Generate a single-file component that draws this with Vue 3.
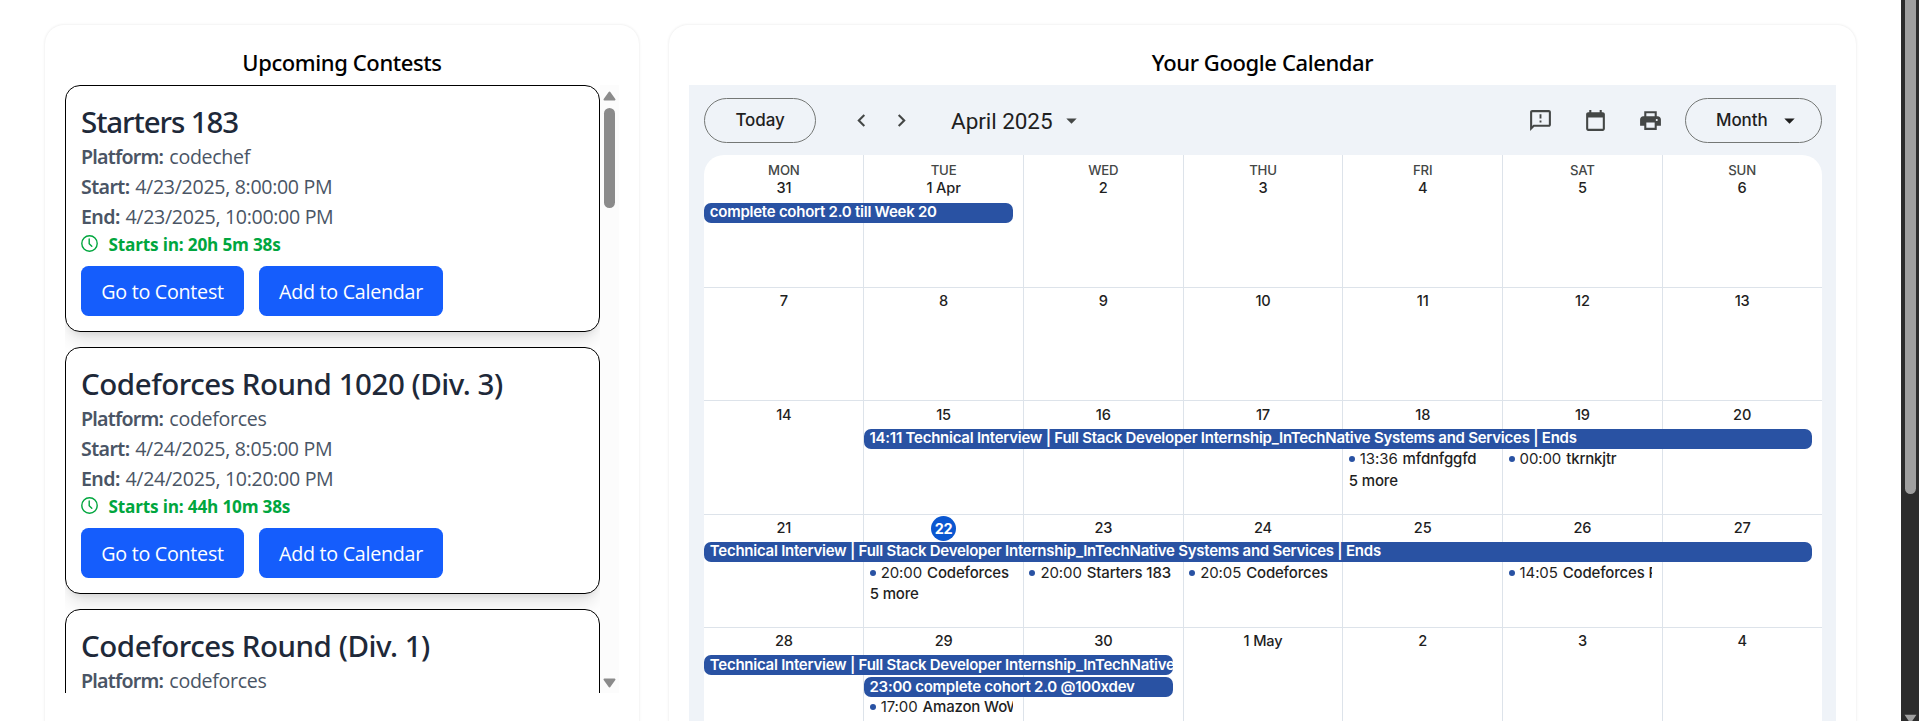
<script setup>
const contests = [
  { title: 'Starters 183', tight: true, platform: 'codechef', start: '4/23/2025, 8:00:00 PM', end: '4/23/2025, 10:00:00 PM', left: '20h 5m 38s' },
  { title: 'Codeforces Round 1020 (Div. 3)', platform: 'codeforces', start: '4/24/2025, 8:05:00 PM', end: '4/24/2025, 10:20:00 PM', left: '44h 10m 38s' },
  { title: 'Codeforces Round (Div. 1)', platform: 'codeforces' },
]
const names = ['MON', 'TUE', 'WED', 'THU', 'FRI', 'SAT', 'SUN']
const interview = 'Technical Interview | Full Stack Developer Internship_InTechNative Systems and Services | Ends'
const weeks = [
  { cls: 'first', days: ['31', '1 Apr', '2', '3', '4', '5', '6'], bars: [{ row: 2, from: 1, to: 3, text: 'complete cohort 2.0 till Week 20' }], items: [] },
  { cls: 'second', days: ['7', '8', '9', '10', '11', '12', '13'], bars: [], items: [] },
  {
    cls: 'third', days: ['14', '15', '16', '17', '18', '19', '20'],
    bars: [{ row: 2, from: 2, to: 8, text: '14:11 ' + interview }],
    items: [
      { row: 3, col: 5, time: '13:36', text: 'mfdnfggfd' },
      { row: 4, col: 5, text: '5 more' },
      { row: 3, col: 6, time: '00:00', text: 'tkrnkjtr' },
    ],
  },
  {
    cls: 'fourth', days: ['21', '22', '23', '24', '25', '26', '27'],
    bars: [{ row: 2, from: 1, to: 8, text: interview }],
    items: [
      { row: 3, col: 2, time: '20:00', text: 'Codeforces' },
      { row: 4, col: 2, text: '5 more' },
      { row: 3, col: 3, time: '20:00', text: 'Starters 183' },
      { row: 3, col: 4, time: '20:05', text: 'Codeforces' },
      { row: 3, col: 6, time: '14:05', text: 'Codeforces R' },
    ],
  },
  {
    cls: 'fifth', days: ['28', '29', '30', '1 May', '2', '3', '4'],
    bars: [
      { row: 2, from: 1, to: 4, text: interview },
      { row: 3, from: 2, to: 4, text: '23:00 complete cohort 2.0 @100xdev' },
    ],
    items: [{ row: 4, col: 2, time: '17:00', text: 'Amazon WoW' }],
  },
]
</script>

<template>
  <div class="page">
    <main class="content">
      <section class="panel contests">
        <h2>Upcoming Contests</h2>
        <div class="scroller">
          <div class="list">
            <article v-for="c in contests" :key="c.title" class="card">
              <h3 :class="{ tight: c.tight }">{{ c.title }}</h3>
              <p><b class="lp">Platform:</b> {{ c.platform }}</p>
              <template v-if="c.start">
                <p><b>Start:</b> {{ c.start }}</p>
                <p><b>End:</b> {{ c.end }}</p>
                <div class="countdown">
                  <svg width="17" height="17" viewBox="0 0 17 17" fill="none" stroke="currentColor" stroke-width="1.4" stroke-linecap="round" stroke-linejoin="round">
                    <circle cx="8.5" cy="8.5" r="7.7" />
                    <path d="M8.2 4v4.8l2.6 2.4" />
                  </svg>
                  <span>Starts in: {{ c.left }}</span>
                </div>
                <div class="actions">
                  <button class="go">Go to Contest</button>
                  <button class="add">Add to Calendar</button>
                </div>
              </template>
            </article>
          </div>
          <div class="track">
            <svg class="up" width="13" height="10" viewBox="0 0 13 10"><path d="M6.5 1.5 11.5 8.5H1.5Z" /></svg>
            <i class="thumb"></i>
            <svg class="down" width="13" height="10" viewBox="0 0 13 10"><path d="M6.5 8.5 11.5 1.5H1.5Z" /></svg>
          </div>
        </div>
      </section>

      <section class="panel calendar">
        <h2>Your Google Calendar</h2>
        <div class="frame">
          <header class="toolbar">
            <button class="pill today-btn">Today</button>
            <svg class="chev prev" width="25" height="25" viewBox="0 0 24 24"><path d="M15.41 7.41 14 6l-6 6 6 6 1.41-1.41L10.83 12z" /></svg>
            <svg class="chev" width="25" height="25" viewBox="0 0 24 24"><path d="M10 6 8.59 7.41 13.17 12l-4.58 4.59L10 18l6-6z" /></svg>
            <span class="month">April 2025</span>
            <svg class="caret" width="25" height="25" viewBox="0 0 24 24"><path d="m7 10 5 5 5-5z" /></svg>
            <div class="tools">
              <svg width="25" height="25" viewBox="0 0 24 24"><path d="M20 2H4c-1.1 0-2 .9-2 2v18l4-4h14c1.1 0 2-.9 2-2V4c0-1.1-.9-2-2-2zm0 14H5.17L4 17.17V4h16v12zM11.1 6h1.8v4h-1.8zm0 6h1.8v2h-1.8z" /></svg>
              <svg width="25" height="25" viewBox="0 0 24 24"><path d="M19 4h-1V2h-2v2H8V2H6v2H5c-1.11 0-1.99.9-1.99 2L3 20c0 1.1.89 2 2 2h14c1.1 0 2-.9 2-2V6c0-1.1-.9-2-2-2zm0 16H5V9h14v11z" /></svg>
              <svg width="25" height="25" viewBox="0 0 24 24"><path fill-rule="evenodd" d="M19 8h-1V3H6v5H5c-1.66 0-3 1.34-3 3v6h4v4h12v-4h4v-6c0-1.66-1.34-3-3-3zM8 5h8v3H8V5zm8 14H8v-5h8v5zm2-6.5c-.55 0-1-.45-1-1s.45-1 1-1 1 .45 1 1-.45 1-1 1z" /></svg>
            </div>
            <button class="pill view-btn">Month
              <svg width="25" height="25" viewBox="0 0 24 24"><path d="m7 10 5 5 5-5z" /></svg>
            </button>
          </header>
          <div class="grid">
            <div v-for="(w, wi) in weeks" :key="w.cls" class="week" :class="w.cls">
              <div v-for="(d, i) in w.days" :key="d" class="day" :class="'c' + (i + 1)">
                <span v-if="wi === 0" class="name">{{ names[i] }}</span>
                <span class="date" :class="{ current: d === '22' }">{{ d }}</span>
              </div>
              <div v-for="b in w.bars" :key="b.row" class="bar" :style="{ gridRow: b.row, gridColumn: b.from + ' / ' + b.to }" :class="{ inset: b.from > 1 }">{{ b.text }}</div>
              <div v-for="e in w.items" :key="e.row + '-' + e.col" class="item" :class="{ more: !e.time }" :style="{ gridRow: e.row, gridColumn: e.col }">
                <template v-if="e.time"><i class="dot"></i><span class="time">{{ e.time }}</span></template>
                <span>{{ e.text }}</span>
              </div>
            </div>
          </div>
        </div>
      </section>
    </main>
    <aside class="window-track">
      <i class="window-thumb"></i>
      <svg width="13" height="10" viewBox="0 0 13 10"><path d="M6.5 9.5 12.5 .8H.5Z" /></svg>
    </aside>
  </div>
</template>

<style>
html, body { margin: 0; background: #fff; overflow: hidden; }
</style>

<style scoped>
* { box-sizing: border-box; }
.page { display: flex; width: 1919px; height: 721px; overflow: hidden; background: #fff; font-family: "Open Sans", "Noto Sans", sans-serif; }
.content { flex: 1; display: flex; gap: 30px; padding: 25px 45px 0; height: 900px; }
.panel { border-radius: 19px; padding: 18px 20px 0; background: #fff; box-shadow: 0 0 3px rgba(0, 0, 0, .11); height: 850px; }
.contests { width: 594px; flex: none; }
.calendar { width: 1187px; flex: none; }
h2 { margin: 0; height: 42px; text-align: center; font: 500 22px/38px "Noto Sans", sans-serif; letter-spacing: -.4px; color: #000; }
.scroller { display: flex; height: 608px; overflow: hidden; }
.list { width: 535px; display: flex; flex-direction: column; gap: 15px; overflow: hidden; }
.card { flex: none; height: 247px; border: 1px solid #000; border-radius: 15px; padding: 15px; background: #fff; box-shadow: 0 12px 19px -4px rgba(0, 0, 0, .12), 0 5px 8px -5px rgba(0, 0, 0, .12); }
h3 { margin: 0; height: 41px; font: 500 29.5px/42px "Noto Sans", sans-serif; letter-spacing: -.46px; color: #1e2939; white-space: nowrap; }
.tight { letter-spacing: -1.1px; }
p { margin: 0; height: 30px; line-height: 30px; font-size: 19.6px; letter-spacing: -.32px; color: #4a5565; white-space: nowrap; }
p b { font-family: "Noto Sans", sans-serif; font-weight: 600; letter-spacing: -.6px; margin-right: 1px; }
p .lp { letter-spacing: -.78px; margin-right: 1.5px; }
.countdown { display: flex; align-items: center; gap: 10.5px; height: 25px; color: #00a63e; font-weight: 700; font-size: 17.2px; letter-spacing: -.2px; }
.countdown svg { margin-bottom: 3px; }
.actions { display: flex; gap: 15px; margin-top: 9px; }
.actions button { height: 50px; border: 0; border-radius: 7.5px; padding: 2px 0 0; background: #155dfc; color: #fff; font: 400 19.7px/48px "Open Sans", sans-serif; letter-spacing: -.27px; }
.go { width: 163px; }
.add { width: 184px; }
.track { width: 19px; background: #fcfcfc; display: flex; flex-direction: column; align-items: center; fill: #8b8b8b; stroke: #8b8b8b; stroke-width: 2; stroke-linejoin: round; }
.up { margin-top: 6px; flex: none; }
.thumb { flex: none; margin-top: 7px; width: 11px; height: 100px; border-radius: 6px; background: #8b8b8b; }
.down { margin-top: auto; margin-bottom: 5px; flex: none; }

.frame { height: 760px; background: #eff3f8; padding: 13px 14px 0 14.5px; font-family: Inter, Roboto, sans-serif; color: #1f1f1f; }
.toolbar { display: flex; align-items: center; height: 45px; fill: #444746; }
.pill { height: 45px; border: 1px solid #747775; border-radius: 23px; background: transparent; color: #1f1f1f; font: 500 17px/43px Inter, Roboto, sans-serif; letter-spacing: -.1px; padding: 0; }
.today-btn { width: 112px; margin-left: .5px; }
.chev { flex: none; margin-right: 15px; }
.prev { margin-left: 32.5px; }
.month { font: 400 22.5px/30px Roboto, sans-serif; margin-left: 22.5px; width: 107.5px; letter-spacing: -.05px; white-space: nowrap; }
.caret { flex: none; }
.tools { display: flex; gap: 30px; margin-left: auto; margin-right: 22px; }
.view-btn { width: 137px; display: flex; align-items: center; padding-left: 30px; gap: 9.5px; fill: #1f1f1f; }
.grid { margin-top: 12px; width: 1118px; border-radius: 20px 20px 0 0; background: #fff; overflow: hidden; }
.week { display: grid; grid-template-columns: repeat(7, minmax(0, 1fr)); row-gap: 2px; border-top: 1px solid #dde3ea; height: 113px; grid-template-rows: 26px 20px 20px 20px 1fr; font-size: 15px; font-weight: 500; letter-spacing: -.17px; }
.first { height: 132px; border-top: 0; grid-template-rows: 46px 20px 20px 20px 1fr; }
.third { height: 114px; }
.fourth { grid-template-rows: 25px 20px 20px 20px 1fr; }
.fifth { height: 200px; grid-template-rows: 25px 20px 20px 20px 1fr; }
.day { grid-row: 1 / 6; display: flex; flex-direction: column; align-items: center; border-left: 1px solid #dde3ea; }
.c1 { grid-column: 1; border-left-color: transparent; }
.c2 { grid-column: 2; }
.c3 { grid-column: 3; }
.c4 { grid-column: 4; }
.c5 { grid-column: 5; }
.c6 { grid-column: 6; }
.c7 { grid-column: 7; }
.date { height: 26px; line-height: 26px; font-size: 14.6px; }
.third .date { line-height: 28px; }
.first .date { line-height: 18px; }
.name { margin-top: 7px; height: 17px; line-height: 17px; font-size: 13.2px; letter-spacing: -.2px; color: #444746; }
.current { width: 25px; height: 25px; line-height: 25px; margin-top: 1px; border-radius: 50%; background: #0b57d0; color: #fff; text-align: center; font-weight: 700; font-size: 14.5px; letter-spacing: -.3px; }
.bar { margin-right: 9.5px; padding-left: 6.3px; border-radius: 7px; background: #2952a3; color: #fff; line-height: 18px; font-weight: 560; letter-spacing: -.25px; white-space: nowrap; overflow: hidden; }
.fifth .bar { line-height: 19px; }
.inset { margin-left: 1px; padding-left: 5.3px; }
.item { margin: 0 10px 0 6.5px; display: flex; align-items: center; white-space: nowrap; overflow: hidden; line-height: 18px; height: 18px; }
.third .item, .fifth .item { margin-top: -1px; }
.more { margin-top: -1px; }
.item span { flex: none; }
.dot { flex: none; width: 6px; height: 6px; border-radius: 50%; background: #2952a3; margin-right: 5px; }
.time { font-weight: 400; margin-right: 5px; letter-spacing: -.1px; }

.window-track { width: 18px; height: 721px; background: #2c2c2c; display: flex; flex-direction: column; align-items: center; fill: #9f9f9f; }
.window-thumb { flex: none; width: 11px; height: 494px; border-radius: 0 0 6px 6px; background: #9f9f9f; margin-left: 1px; }
.window-track svg { margin-top: 220px; flex: none; }
</style>
